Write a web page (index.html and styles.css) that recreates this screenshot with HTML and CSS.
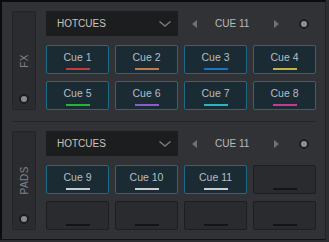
FILE: index.html
```html
<!DOCTYPE html>
<html lang="en">
<head>
    <meta charset="UTF-8">
    <title>Hotcues</title>
    <link rel="stylesheet" href="styles.css">
</head>
<body>
    <div class="frame">
        <!-- FX deck -->
        <div class="section">
            <div class="strip">
                <span class="strip-label">FX</span>
                <span class="strip-dot"></span>
            </div>
            <div class="main">
                <div class="top-row">
                    <div class="dropdown">
                        <span>HOTCUES</span>
                        <svg class="chevron" width="12" height="6" viewBox="0 0 12 6"><path d="M0.5 0.5 L6 5 L11.5 0.5" fill="none" stroke="#7a7b7e" stroke-width="1.4"/></svg>
                    </div>
                    <div class="nav">
                        <span class="arrow arrow-left"></span>
                        <span class="cue-name">CUE 11</span>
                        <span class="arrow arrow-right"></span>
                        <span class="nav-dot"></span>
                    </div>
                </div>
                <div class="pads">
                    <div class="pad cue"><span class="pad-text">Cue 1</span><span class="bar" style="background:#c23b3e"></span></div>
                    <div class="pad cue"><span class="pad-text">Cue 2</span><span class="bar" style="background:#c27a4c"></span></div>
                    <div class="pad cue"><span class="pad-text">Cue 3</span><span class="bar" style="background:#1f72c4"></span></div>
                    <div class="pad cue"><span class="pad-text">Cue 4</span><span class="bar" style="background:#c2b23e"></span></div>
                    <div class="pad cue"><span class="pad-text">Cue 5</span><span class="bar" style="background:#22b632"></span></div>
                    <div class="pad cue"><span class="pad-text">Cue 6</span><span class="bar" style="background:#8a5ccc"></span></div>
                    <div class="pad cue"><span class="pad-text">Cue 7</span><span class="bar" style="background:#27b4c4"></span></div>
                    <div class="pad cue"><span class="pad-text">Cue 8</span><span class="bar" style="background:#c23d92"></span></div>
                </div>
            </div>
        </div>

        <div class="divider"></div>

        <!-- PADS deck -->
        <div class="section">
            <div class="strip">
                <span class="strip-label">PADS</span>
                <span class="strip-dot"></span>
            </div>
            <div class="main">
                <div class="top-row">
                    <div class="dropdown">
                        <span>HOTCUES</span>
                        <svg class="chevron" width="12" height="6" viewBox="0 0 12 6"><path d="M0.5 0.5 L6 5 L11.5 0.5" fill="none" stroke="#7a7b7e" stroke-width="1.4"/></svg>
                    </div>
                    <div class="nav">
                        <span class="arrow arrow-left"></span>
                        <span class="cue-name">CUE 11</span>
                        <span class="arrow arrow-right"></span>
                        <span class="nav-dot"></span>
                    </div>
                </div>
                <div class="pads">
                    <div class="pad cue"><span class="pad-text">Cue 9</span><span class="bar light"></span></div>
                    <div class="pad cue"><span class="pad-text">Cue 10</span><span class="bar light"></span></div>
                    <div class="pad cue"><span class="pad-text">Cue 11</span><span class="bar light"></span></div>
                    <div class="pad empty"><span class="pad-text"></span><span class="bar"></span></div>
                    <div class="pad empty"><span class="pad-text"></span><span class="bar"></span></div>
                    <div class="pad empty"><span class="pad-text"></span><span class="bar"></span></div>
                    <div class="pad empty"><span class="pad-text"></span><span class="bar"></span></div>
                    <div class="pad empty"><span class="pad-text"></span><span class="bar"></span></div>
                </div>
            </div>
        </div>
    </div>
</body>
</html>
```

FILE: styles.css
```css
/* General body styling */
body {
    margin: 0;
    background: #2c2d30;
    font-family: 'Liberation Sans', Arial, sans-serif;
}

.frame {
    box-sizing: border-box;
    width: 326px;
    height: 240px;
    background: #313235;
    border-top: 2px solid #0c0c0c;
    border-left: 2px solid #0c0c0c;
    border-right: 1px solid #222326;
    border-bottom: 1px solid #111214;
    padding: 9px 9px 0 10px;
}

/* Deck section */
.section {
    display: flex;
    gap: 10px;
    height: 99px;
}

.strip {
    box-sizing: border-box;
    width: 24px;
    display: grid;
    justify-items: center;
    background: #2b2c2f;
    border: 1px solid #232427;
}

.strip-label,
.strip-dot {
    grid-area: 1 / 1;
}

.strip-label {
    align-self: center;
    writing-mode: vertical-rl;
    transform: rotate(180deg);
    font-size: 10px;
    letter-spacing: 0.5px;
    color: #7c838b;
}

.strip-dot {
    align-self: end;
    margin-bottom: 5px;
    width: 6px;
    height: 6px;
    border-radius: 50%;
    background: #8b8c8e;
    border: 2px solid #1c1d1f;
}

.main {
    display: flex;
    flex-direction: column;
    gap: 9px;
    width: 270px;
}

/* Dropdown and cue navigation */
.top-row {
    display: flex;
    height: 25px;
}

.dropdown {
    box-sizing: border-box;
    width: 132px;
    display: flex;
    align-items: center;
    justify-content: space-between;
    padding: 0 7px 0 11px;
    background: #1c1d1f;
    color: #c8c5b8;
    font-size: 10px;
}

.chevron {
    margin-top: 1px;
}

.nav {
    display: flex;
    align-items: center;
    padding-left: 14px;
}

.arrow {
    width: 0;
    height: 0;
    border-top: 4px solid transparent;
    border-bottom: 4px solid transparent;
}

.arrow-left {
    border-right: 5px solid #707174;
}

.arrow-right {
    border-left: 5px solid #707174;
}

.cue-name {
    width: 36px;
    margin: 0 23px 0 18px;
    color: #b9babc;
    font-size: 10px;
}

.nav-dot {
    margin-left: 20px;
    width: 6px;
    height: 6px;
    border-radius: 50%;
    background: #8e8f91;
    border: 2px solid #1e1f21;
}

/* Pads grid */
.pads {
    display: grid;
    grid-template-columns: repeat(4, 1fr);
    gap: 7px 6px;
}

.pad {
    box-sizing: border-box;
    height: 29px;
    display: flex;
    flex-direction: column;
    align-items: center;
    padding-top: 4px;
    border-radius: 2px;
}

.cue {
    background: #1a2b34;
    border: 1px solid #1e6b88;
}

.empty {
    background: #2a2b2e;
    border: 1px solid #1d1e20;
}

.pad-text {
    height: 14px;
    line-height: 14px;
    font-size: 10.5px;
    color: #b6bdc4;
}

.bar {
    margin-top: 4px;
    width: 24px;
    height: 2px;
    background: #141414;
}

.bar.light {
    background: #c9cdd1;
}

.divider {
    height: 1px;
    margin: 11px 0 9px;
    background: #242528;
}
```
